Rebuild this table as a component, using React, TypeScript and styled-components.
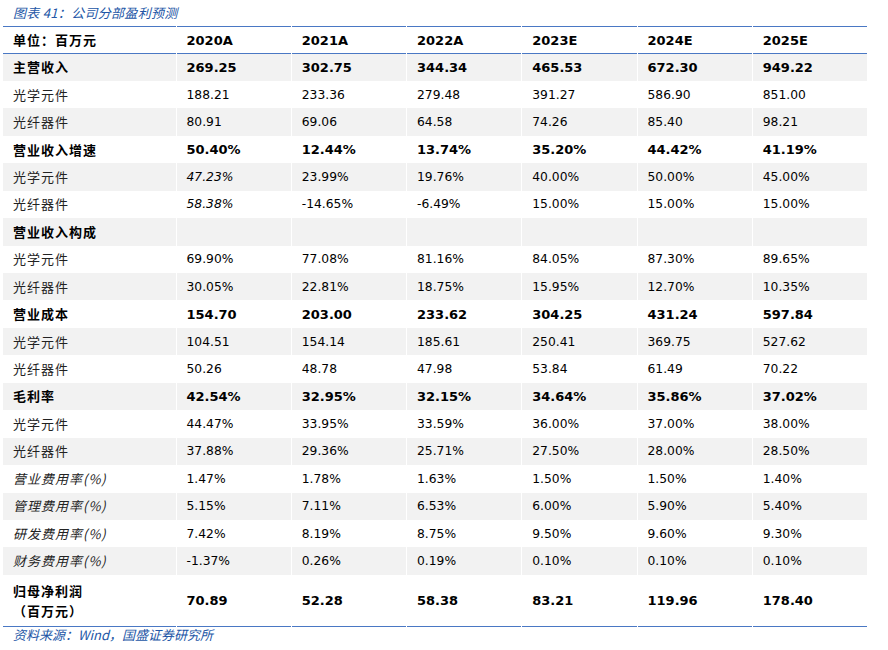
import React from "react";
import styled, { createGlobalStyle } from "styled-components";

const GlobalStyle = createGlobalStyle`
  body {
    margin: 0;
    background: #ffffff;
  }
`;

const Page = styled.div`
  width: 865px;
  padding-left: 3px;
`;

const Caption = styled.div`
  height: 26px;
  line-height: 25px;
  padding-left: 10px;
  font-family: "Noto Sans CJK SC", "DejaVu Sans", sans-serif;
  font-style: italic;
  font-size: 13px;
  letter-spacing: 0.3px;
  color: #2356a6;
`;

const Table = styled.table`
  width: 865px;
  table-layout: fixed;
  border-collapse: collapse;
  border-top: 1.5px solid #4a78c4;
  border-bottom: 1.5px solid #4a78c4;
  font-family: "DejaVu Sans", "Noto Sans CJK SC", sans-serif;
  color: #000;
`;

const HeadRow = styled.tr`
  height: 27px;
  border-bottom: 1.5px solid #4a78c4;
`;

const Row = styled.tr<{ $shade: boolean; $tall?: boolean }>`
  height: ${(p) => (p.$tall ? "52px" : "27.45px")};
  background: ${(p) => (p.$shade ? "#f2f2f2" : "#ffffff")};
`;

const Label = styled.td<{ $bold?: boolean; $italic?: boolean }>`
  padding: 0 0 0 10px;
  vertical-align: middle;
  white-space: nowrap;
  font-family: "Noto Sans CJK SC", "DejaVu Sans", sans-serif;
  font-size: 13px;
  letter-spacing: 1px;
  line-height: 20px;
  font-weight: ${(p) => (p.$bold ? 700 : 400)};
  font-style: ${(p) => (p.$italic ? "italic" : "normal")};
  color: ${(p) => (p.$bold ? "#000" : "#222")};
  border-right: 1px solid #ffffff;
`;

const Value = styled.td<{ $bold?: boolean; $italic?: boolean }>`
  padding: 0 0 0 10px;
  vertical-align: middle;
  white-space: nowrap;
  font-size: ${(p) => (p.$bold ? "13px" : "12.3px")};
  font-weight: ${(p) => (p.$bold ? 700 : 400)};
  font-style: ${(p) => (p.$italic ? "italic" : "normal")};
  border-right: 1px solid #ffffff;
`;

const Source = styled.div`
  padding-left: 10px;
  line-height: 16px;
  font-family: "Noto Sans CJK SC", "DejaVu Sans", sans-serif;
  font-style: italic;
  font-size: 13px;
  color: #2356a6;
`;

type RowData = {
  label: string;
  values: string[];
  bold?: boolean;
  italicLabel?: boolean;
  italicFirst?: boolean;
};

const years = ["2020A", "2021A", "2022A", "2023E", "2024E", "2025E"];

const rows: RowData[] = [
  { label: "主营收入", bold: true, values: ["269.25", "302.75", "344.34", "465.53", "672.30", "949.22"] },
  { label: "光学元件", values: ["188.21", "233.36", "279.48", "391.27", "586.90", "851.00"] },
  { label: "光纤器件", values: ["80.91", "69.06", "64.58", "74.26", "85.40", "98.21"] },
  { label: "营业收入增速", bold: true, values: ["50.40%", "12.44%", "13.74%", "35.20%", "44.42%", "41.19%"] },
  { label: "光学元件", italicFirst: true, values: ["47.23%", "23.99%", "19.76%", "40.00%", "50.00%", "45.00%"] },
  { label: "光纤器件", italicFirst: true, values: ["58.38%", "-14.65%", "-6.49%", "15.00%", "15.00%", "15.00%"] },
  { label: "营业收入构成", bold: true, values: ["", "", "", "", "", ""] },
  { label: "光学元件", values: ["69.90%", "77.08%", "81.16%", "84.05%", "87.30%", "89.65%"] },
  { label: "光纤器件", values: ["30.05%", "22.81%", "18.75%", "15.95%", "12.70%", "10.35%"] },
  { label: "营业成本", bold: true, values: ["154.70", "203.00", "233.62", "304.25", "431.24", "597.84"] },
  { label: "光学元件", values: ["104.51", "154.14", "185.61", "250.41", "369.75", "527.62"] },
  { label: "光纤器件", values: ["50.26", "48.78", "47.98", "53.84", "61.49", "70.22"] },
  { label: "毛利率", bold: true, values: ["42.54%", "32.95%", "32.15%", "34.64%", "35.86%", "37.02%"] },
  { label: "光学元件", values: ["44.47%", "33.95%", "33.59%", "36.00%", "37.00%", "38.00%"] },
  { label: "光纤器件", values: ["37.88%", "29.36%", "25.71%", "27.50%", "28.00%", "28.50%"] },
  { label: "营业费用率(%)", italicLabel: true, values: ["1.47%", "1.78%", "1.63%", "1.50%", "1.50%", "1.40%"] },
  { label: "管理费用率(%)", italicLabel: true, values: ["5.15%", "7.11%", "6.53%", "6.00%", "5.90%", "5.40%"] },
  { label: "研发费用率(%)", italicLabel: true, values: ["7.42%", "8.19%", "8.75%", "9.50%", "9.60%", "9.30%"] },
  { label: "财务费用率(%)", italicLabel: true, values: ["-1.37%", "0.26%", "0.19%", "0.10%", "0.10%", "0.10%"] },
];

const profit = ["70.89", "52.28", "58.38", "83.21", "119.96", "178.40"];

export default function App() {
  return (
    <Page>
      <GlobalStyle />
      <Caption>图表 41：公司分部盈利预测</Caption>
      <Table>
        <colgroup>
          <col style={{ width: 173 }} />
          {years.map((y) => (
            <col key={y} />
          ))}
        </colgroup>
        <thead>
          <HeadRow>
            <Label $bold>单位：百万元</Label>
            {years.map((y) => (
              <Value key={y} $bold>
                {y}
              </Value>
            ))}
          </HeadRow>
        </thead>
        <tbody>
          {rows.map((r, i) => (
            <Row key={i} $shade={i % 2 === 0}>
              <Label $bold={r.bold} $italic={r.italicLabel}>
                {r.label}
              </Label>
              {r.values.map((v, j) => (
                <Value key={j} $bold={r.bold} $italic={r.italicFirst && j === 0}>
                  {v}
                </Value>
              ))}
            </Row>
          ))}
          <Row $shade={false} $tall>
            <Label $bold>
              归母净利润
              <br />
              （百万元）
            </Label>
            {profit.map((v, j) => (
              <Value key={j} $bold>
                {v}
              </Value>
            ))}
          </Row>
        </tbody>
      </Table>
      <Source>资料来源：Wind，国盛证券研究所</Source>
    </Page>
  );
}
